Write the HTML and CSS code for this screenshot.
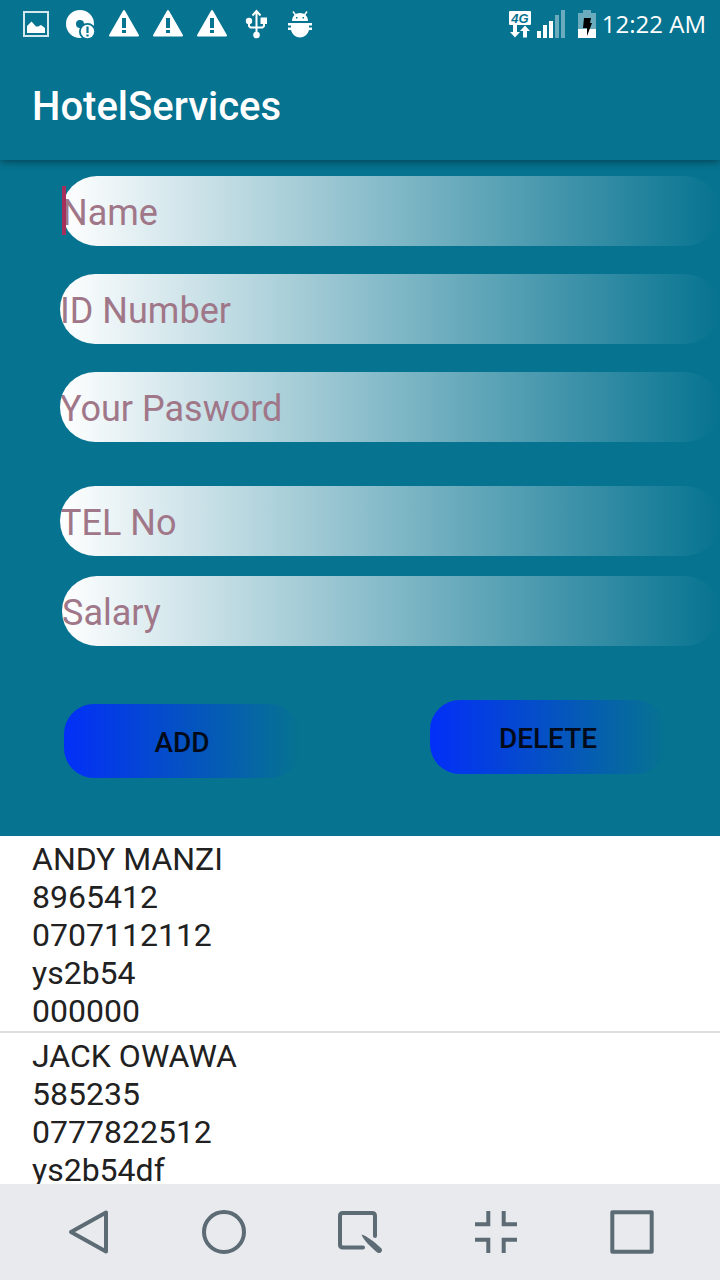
FILE: index.html
```html
<!DOCTYPE html>
<html lang="en">
<head>
<meta charset="utf-8">
<meta name="viewport" content="width=device-width, initial-scale=1">
<title>HotelServices</title>
<link rel="stylesheet" href="styles.css">
</head>
<body>
<header class="top">
  <div class="status">
    <div class="notices">
      <svg class="notice" viewBox="0 0 30 30" aria-hidden="true"><path d="M3 3H27V27H3Z" fill="none" stroke="#d5e8ed" stroke-width="2"/><path d="M6 24V17L10.500 12.500L15 17.500H17L20 16L24 19V24Z" fill="#fff"/></svg>
      <svg class="notice" viewBox="0 0 30 30" aria-hidden="true"><circle cx="15" cy="15" r="9" fill="none" stroke="#fff" stroke-width="10"/><circle cx="22.500" cy="22.500" r="8.500" fill="#067390"/><circle cx="22.500" cy="22.500" r="6.700" fill="#fff"/><path d="M22.500 17.500V24M22.500 25.500V27.500" stroke="#067390" stroke-width="2.200"/></svg>
      <svg class="notice" viewBox="0 0 30 30" aria-hidden="true"><path d="M15 2L29 26.500H1Z" fill="#fff" stroke="#fff" stroke-width="2" stroke-linejoin="round"/><path d="M15 9V19M15 21V24" stroke="#067390" stroke-width="4"/></svg>
      <svg class="notice" viewBox="0 0 30 30" aria-hidden="true"><path d="M15 2L29 26.500H1Z" fill="#fff" stroke="#fff" stroke-width="2" stroke-linejoin="round"/><path d="M15 9V19M15 21V24" stroke="#067390" stroke-width="4"/></svg>
      <svg class="notice" viewBox="0 0 30 30" aria-hidden="true"><path d="M15 2L29 26.500H1Z" fill="#fff" stroke="#fff" stroke-width="2" stroke-linejoin="round"/><path d="M15 9V19M15 21V24" stroke="#067390" stroke-width="4"/></svg>
      <svg class="notice" viewBox="0 0 30 30" aria-hidden="true"><path d="M15.500 25V3M11.500 6.500L15.500 2L19.500 6.500M8 12V17L9.500 18.500H21.500L23 17V12" fill="none" stroke="#fff" stroke-width="2"/><circle cx="8" cy="12" r="3.200" fill="#fff"/><path d="M19.500 8.500H26V15H19.500Z" fill="#fff"/><circle cx="15.500" cy="26" r="3.300" fill="#fff"/></svg>
      <svg class="notice" viewBox="0 0 30 30" aria-hidden="true"><path d="M7 12C7 7 10.500 4 15 4S23 7 23 12Z" fill="#fff"/><path d="M8 2.500L10.500 6M22 2.500L19.500 6" stroke="#fff" stroke-width="1.500"/><path d="M11 8H12.500V9.500H11ZM17.500 8H19V9.500H17.500Z" fill="#067390"/><path d="M3 14H27V16.500H24V18.500H27V21H24C23 25.500 19 28.500 15 28.500S7 25.500 6 21H3V18.500H6V16.500H3Z" fill="#fff"/></svg>
    </div>
    <div class="system">
      <svg class="network" viewBox="0 0 22 30" aria-label="4G network"><rect y="2" width="22" height="14" rx="1" fill="#fff"/><text x="11" y="13.500" text-anchor="middle" class="network-label">4G</text><path d="M4 16H8V23H11L6 28.500L1 23H4ZM14 28.500V22H11L16 16.500L21 22H18V28.500Z" fill="#fff"/></svg>
      <svg class="signal" viewBox="0 0 28 30" aria-label="Signal strength"><path d="M0 22H4V29H0ZM6 16H10V29H6ZM12 12H16V29H12Z" fill="#fff"/><path d="M18 6H22V29H18ZM24 1H28V29H24Z" fill="#6aacbd"/></svg>
      <svg class="battery" viewBox="0 0 18 30" aria-label="Battery charging"><path d="M5 1H13V4H18V20H0V4H5Z" fill="#6aacbd"/><path d="M0 20H18V29H0Z" fill="#fff"/><path d="M6 9H13L12 14H14L9 27V19H5Z" fill="#000"/></svg>
      <time class="clock">12:22 AM</time>
    </div>
  </div>
  <h1 class="title">HotelServices</h1>
</header>

<main class="content">
  <form class="form">
    <div class="fields">
      <div class="focused inset"><input class="field" type="text" placeholder="Name" aria-label="Name"><span class="caret"></span></div>
      <input class="field" type="text" placeholder="ID Number" aria-label="ID Number">
      <input class="field" type="password" placeholder="Your Pasword" aria-label="Your Pasword">
    </div>
    <div class="fields contact">
      <input class="field" type="tel" placeholder="TEL No" aria-label="TEL No">
      <div class="inset"><input class="field" type="text" placeholder="Salary" aria-label="Salary"></div>
    </div>
    <div class="actions">
      <button class="action add" type="button">ADD</button>
      <button class="action" type="button">DELETE</button>
    </div>
  </form>
  <ul class="records">
    <li class="record"><div>ANDY MANZI</div><div>8965412</div><div>0707112112</div><div>ys2b54</div><div>000000</div></li>
    <li class="record"><div>JACK OWAWA</div><div>585235</div><div>0777822512</div><div>ys2b54df</div></li>
  </ul>
</main>

<nav class="nav">
  <button class="key" type="button" aria-label="Back"><svg viewBox="0 0 48 48"><path d="M7 24L42 4.500V43.500Z"/></svg></button>
  <button class="key" type="button" aria-label="Home"><svg viewBox="0 0 48 48"><circle cx="24" cy="24" r="20"/></svg></button>
  <button class="key" type="button" aria-label="Capture"><svg viewBox="0 0 48 48"><path d="M39 28V8Q39 5 36 5H7Q4 5 4 8V36.500Q4 39.500 7 39.500H27" stroke-linecap="round"/><path class="pen" d="M25.500 26.500C31 28 40 35 45.500 40.500Q47 43 44 45Q42 45.500 40 43.500C35 39 28 33 25.500 26.500Z"/></svg></button>
  <button class="key" type="button" aria-label="Shrink"><svg viewBox="0 0 48 48"><path d="M16.300 3V16.300H3M31.700 3V16.300H45M3 31.700H16.300V45M45 31.700H31.700V45" stroke-linejoin="miter"/></svg></button>
  <button class="key" type="button" aria-label="Recent apps"><svg viewBox="0 0 48 48"><rect x="4.300" y="4.300" width="39.400" height="39.400" stroke-linejoin="round"/></svg></button>
</nav>
</body>
</html>
```

FILE: styles.css
```css
* { box-sizing: border-box; }

body {
  margin: 0;
  height: 100vh;
  display: flex;
  flex-direction: column;
  overflow: hidden;
  background: #fff;
  color: #212121;
  font-family: Roboto, "Liberation Sans", sans-serif;
}

.top {
  flex: none;
  position: relative;
  background: #067390;
  color: #fff;
  box-shadow: 0 2px 8px rgba(0, 0, 0, 0.4);
}

.status {
  height: 48px;
  padding: 0 14px 0 21px;
  display: flex;
  justify-content: space-between;
  align-items: center;
}

.notices { display: flex; gap: 14px; }
.notice { width: 30px; height: 30px; }
.system { display: flex; align-items: center; }
.network { width: 22px; height: 30px; margin-right: 6px; }
.network-label { font: italic 700 13px "Liberation Sans", sans-serif; fill: #067390; }
.signal { width: 28px; height: 30px; margin-right: 13px; }
.battery { width: 18px; height: 30px; margin-right: 6px; }
.clock { font: 400 24px/30px "Open Sans", sans-serif; white-space: nowrap; }

.title {
  margin: 0;
  height: 112px;
  padding: 4px 32px 0;
  display: flex;
  align-items: center;
  font-size: 40px;
  font-weight: 500;
}

.content {
  flex: 1;
  min-height: 0;
  overflow: hidden;
}

.form {
  padding: 16px 0 58px 60px;
  background: #067390;
}

.fields { display: flex; flex-direction: column; gap: 28px; }
.contact { margin-top: 44px; gap: 20px; }
.inset { padding-left: 2px; }
.focused { position: relative; }

.field {
  display: block;
  width: 100%;
  height: 70px;
  margin: 0;
  padding: 4px 0 0;
  border: 0;
  border-radius: 35px;
  outline: 0;
  background: linear-gradient(to right, #fff, #067390);
  color: #212121;
  font: 36px Roboto, "Liberation Sans", sans-serif;
}

.field::placeholder { color: #a07788; opacity: 1; }

.caret {
  position: absolute;
  left: 2px;
  top: 10px;
  width: 4px;
  height: 49px;
  background: #a5305c;
}

.actions {
  display: flex;
  justify-content: space-between;
  margin-top: 54px;
  padding: 0 54px 0 4px;
}

.action {
  width: 236px;
  height: 74px;
  padding: 2px 0 0;
  border: 0;
  border-radius: 30px;
  background: linear-gradient(to right, #032ff8, #067390);
  color: #030b1b;
  font: 500 28px Roboto, "Liberation Sans", sans-serif;
}

.add { margin-top: 4px; }

.records {
  margin: 0;
  padding: 0;
  list-style: none;
}

.record {
  padding: 4px 32px 1px;
  border-bottom: 2px solid #dedede;
  font-size: 32px;
  line-height: 38px;
}

.nav {
  flex: none;
  height: 96px;
  padding: 0 20px;
  display: flex;
  background: #e9eaee;
}

.key {
  flex: 1;
  padding: 0;
  border: 0;
  background: none;
  display: flex;
  justify-content: center;
  align-items: center;
}

.key svg {
  width: 48px;
  height: 48px;
  fill: none;
  stroke: #5c6b74;
  stroke-width: 4;
  stroke-linejoin: round;
}

.key .pen { fill: #5c6b74; stroke: none; }
```
